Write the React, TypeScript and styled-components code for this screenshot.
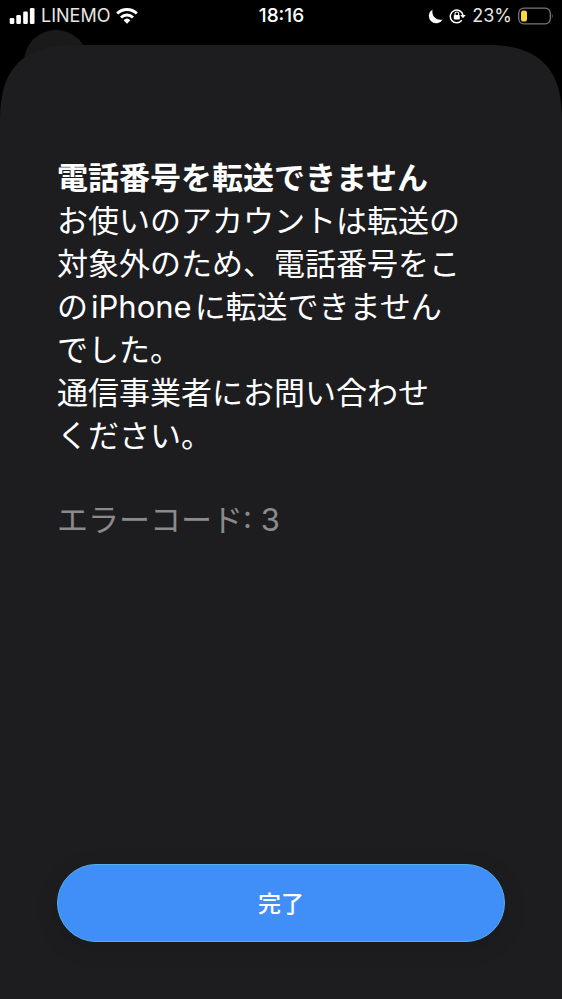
import React from "react";
import styled, { createGlobalStyle } from "styled-components";

const GlobalStyle = createGlobalStyle`
  * { box-sizing: border-box; }
  body {
    margin: 0;
    background: #000;
    color: #fff;
    font-family: Inter, "Noto Sans CJK JP", sans-serif;
  }
`;

const Screen = styled.div`
  min-height: 100vh;
  display: flex;
  flex-direction: column;
  background: #000;
`;

const StatusBar = styled.header`
  position: relative;
  height: 45px;
  padding: 1px 8px 14px 9px;
  display: grid;
  grid-template-columns: 1fr auto 1fr;
  align-items: center;
  font-size: 18px;
  line-height: 30px;
`;

const StatusGroup = styled.div<{ $end?: boolean }>`
  display: flex;
  align-items: center;
  justify-content: ${(p) => (p.$end ? "flex-end" : "flex-start")};
  gap: 6px;
`;

const StatusText = styled.span`
  color: #e6e6e6;
`;

const Time = styled.time`
  font-size: 19px;
  font-weight: 500;
`;

const Icon = styled.svg`
  display: block;
  flex: none;
`;

const BackdropCircle = styled.div`
  position: absolute;
  left: 24px;
  top: 30px;
  width: 64px;
  height: 64px;
  border-radius: 50%;
  background: #1a1a1b;
`;

const Sheet = styled.main`
  position: relative;
  flex: 1;
  display: flex;
  flex-direction: column;
  justify-content: space-between;
  padding: 112px 57px 57px;
  border-radius: 64px 64px 0 0;
  background: #1d1d1f;

  @supports (corner-shape: superellipse(1.44)) {
    border-radius: 80px 80px 0 0;
    corner-shape: superellipse(1.44);
  }
`;

const Message = styled.section`
  font-size: 31px;
  line-height: 43px;
`;

const Title = styled.h1`
  margin: 0;
  font-size: inherit;
  line-height: 42px;
  font-weight: 700;
`;

const Body = styled.p`
  margin: 0;
`;

const Latin = styled.span`
  margin: 0 3px;
`;

const ErrorCode = styled.p`
  margin: 41px 0 0;
  color: #8b8b8e;
`;

const DoneButton = styled.button`
  height: 78px;
  width: 100%;
  padding: 0 0 2px;
  border: 1px solid #50b1ec;
  border-radius: 39px;
  background: #408ff8;
  color: #fff;
  font: inherit;
  font-size: 23px;
  font-weight: 500;
  box-shadow: 0 6px 24px rgba(0, 0, 0, 0.1);
`;

const SignalIcon = () => (
  <Icon width="26" height="18" viewBox="0 0 26 18" fill="#fff" aria-hidden="true">
    <rect x="0.7" y="11" width="4.6" height="6" rx="1.3" />
    <rect x="7.3" y="8" width="4.6" height="9" rx="1.3" />
    <rect x="14.2" y="4.5" width="4.6" height="12.5" rx="1.3" />
    <rect x="20.9" y="1" width="4.6" height="16" rx="1.3" />
  </Icon>
);

const WifiIcon = () => (
  <Icon width="22" height="18" viewBox="0 0 22 18" aria-hidden="true">
    <g fill="none" stroke="#fff" strokeWidth="2.9">
      <path d="M1.2 6.5A14 14 0 0 1 20.8 6.5" />
      <path d="M5 10.5A8.6 8.6 0 0 1 17 10.5" />
    </g>
    <path d="M7.6 13.2A5 5 0 0 1 14.4 13.2L11 16.7Z" fill="#fff" />
  </Icon>
);

const MoonIcon = () => (
  <Icon width="15" height="15" viewBox="0 0 15 15" fill="#fff" aria-hidden="true">
    <path d="M4.6 0.6A7.3 7.3 0 1 0 14.6 10.4C9.4 12 3 7.8 4.6 0.6Z" />
  </Icon>
);

const RotationLockIcon = () => (
  <Icon width="17" height="16" viewBox="0 0 17 16" aria-hidden="true">
    <path d="M12.8 12.3A6.4 6.4 0 1 1 14 7.2" fill="none" stroke="#fff" strokeWidth="1.5" />
    <path d="M11.3 6.9H16.7L14 10.2Z" fill="#fff" />
    <rect x="4.8" y="7" width="6" height="4.6" rx="0.8" fill="#fff" />
    <path d="M6 7.2V5.8A1.8 1.8 0 0 1 9.6 5.8V7.2" fill="none" stroke="#fff" strokeWidth="1.1" />
  </Icon>
);

const BatteryIcon = () => (
  <Icon width="36" height="18" viewBox="1 0 36 18" aria-hidden="true">
    <rect x="1.7" y="1.2" width="31.6" height="15.6" rx="5" fill="none" stroke="#77777a" strokeWidth="1.3" />
    <path d="M34.8 6.2Q36.6 9 34.8 11.8Z" fill="#77777a" />
    <rect x="4" y="3.5" width="6" height="11" rx="2.6" fill="#fbd83c" />
  </Icon>
);

export default function App() {
  return (
    <>
      <GlobalStyle />
      <Screen lang="ja">
        <StatusBar>
          <StatusGroup>
            <SignalIcon />
            <StatusText>LINEMO</StatusText>
            <WifiIcon />
          </StatusGroup>
          <Time>18:16</Time>
          <StatusGroup $end>
            <MoonIcon />
            <RotationLockIcon />
            <StatusText>23%</StatusText>
            <BatteryIcon />
          </StatusGroup>
          <BackdropCircle />
        </StatusBar>
        <Sheet>
          <Message>
            <Title>電話番号を転送できません</Title>
            <Body>
              お使いのアカウントは転送の
              <br />
              対象外のため、電話番号をこ
              <br />
              の<Latin>iPhone</Latin>に転送できません
              <br />
              でした。
              <br />
              通信事業者にお問い合わせ
              <br />
              ください。
            </Body>
            <ErrorCode>エラーコード: 3</ErrorCode>
          </Message>
          <DoneButton type="button">完了</DoneButton>
        </Sheet>
      </Screen>
    </>
  );
}
